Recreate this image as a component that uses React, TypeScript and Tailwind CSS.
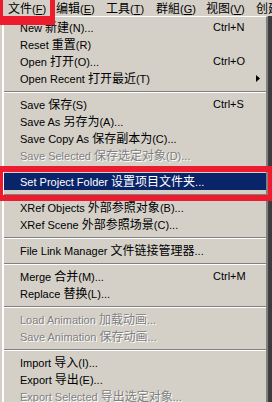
import React from 'react';

type Item =
    | { sep: true }
    | { sep?: false; label: string; shortcut?: string; sub?: boolean; disabled?: boolean; active?: boolean };

const items: Item[] = [
    { label: 'New 新建(N)...', shortcut: 'Ctrl+N' },
    { label: 'Reset 重置(R)' },
    { label: 'Open 打开(O)...', shortcut: 'Ctrl+O' },
    { label: 'Open Recent 打开最近(T)', sub: true },
    { sep: true },
    { label: 'Save 保存(S)', shortcut: 'Ctrl+S' },
    { label: 'Save As 另存为(A)...' },
    { label: 'Save Copy As 保存副本为(C)...' },
    { label: 'Save Selected 保存选定对象(D)...', disabled: true },
    { sep: true },
    { label: 'Set Project Folder 设置项目文件夹...', active: true },
    { sep: true },
    { label: 'XRef Objects 外部参照对象(B)...' },
    { label: 'XRef Scene 外部参照场景(C)...' },
    { sep: true },
    { label: 'File Link Manager 文件链接管理器...' },
    { sep: true },
    { label: 'Merge 合并(M)...', shortcut: 'Ctrl+M' },
    { label: 'Replace 替换(L)...' },
    { sep: true },
    { label: 'Load Animation 加载动画...', disabled: true },
    { label: 'Save Animation 保存动画...', disabled: true },
    { sep: true },
    { label: 'Import 导入(I)...' },
    { label: 'Export 导出(E)...' },
    { label: 'Export Selected 导出选定对象...', disabled: true },
];

const menus = [
    { name: '文件', key: 'F' },
    { name: '编辑', key: 'E' },
    { name: '工具', key: 'T' },
    { name: '群組', key: 'G' },
    { name: '视图', key: 'V' },
    { name: '创建', key: 'C' },
];

// split a label into latin / cjk runs so each gets its own size
const Text: React.FC<{ text: string }> = ({ text }) => (
    <>
        {text.split(/([\u4e00-\u9fff]+)/).map((part, i) =>
            /[\u4e00-\u9fff]/.test(part) ? (
                <span key={i} className="text-[12px] font-['Noto_Sans_CJK_SC',sans-serif]">
                    {part}
                </span>
            ) : (
                <span key={i}>{part}</span>
            )
        )}
    </>
);

export default function App() {
    return (
        <div className="relative w-[272px] h-[402px] overflow-hidden bg-[#d4d0c8] font-['Liberation_Sans','Noto_Sans_CJK_SC',sans-serif] text-[11px] text-black">
            {/* menu bar */}
            <div className="flex h-[16px] items-center">
                {menus.map((m, i) => (
                    <div
                        key={m.name}
                        className={`${i === 0 ? 'ml-[2px] w-[48px]' : 'w-[50px]'} shrink-0 whitespace-nowrap pl-[6px] leading-[16px]`}
                    >
                        <span className="text-[12px] font-['Noto_Sans_CJK_SC',sans-serif]">{m.name}</span>
                        {i < 5 && (
                            <span>
                                (<span className="underline">{m.key}</span>)
                            </span>
                        )}
                    </div>
                ))}
            </div>

            {/* dropdown */}
            <div className="flex">
                <div className="ml-[2px] w-[266px] shrink-0 border-l-2 border-r-2 border-t border-l-white border-r-[#808080] border-t-white pt-[2px]">
                    {items.map((it, i) =>
                        it.sep ? (
                            <div key={i} className="flex h-[9px] items-center">
                                <div className="h-[2px] w-full border-t border-b border-t-[#808080] border-b-white" />
                            </div>
                        ) : (
                            <div
                                key={i}
                                className={`flex h-[17px] items-center whitespace-nowrap pl-[16px] ${
                                    it.active ? 'bg-[#0a246a] text-white' : ''
                                } ${it.disabled ? 'text-[#808080] [text-shadow:1px_1px_0_#ffffff]' : ''}`}
                            >
                                <span className="w-[193px] shrink-0">
                                    <Text text={it.label} />
                                </span>
                                {it.shortcut && <span>{it.shortcut}</span>}
                                {it.sub && (
                                    <svg width="4" height="7" viewBox="0 0 4 7" className="ml-auto mr-[6px]">
                                        <path d="M0 0 L4 3.5 L0 7 Z" fill="#000" />
                                    </svg>
                                )}
                            </div>
                        )
                    )}
                </div>
                <div className="flex-1 border-l border-[#404040] bg-[#3c3c3c]" />
            </div>

            {/* red annotation boxes */}
            <div className="absolute left-0 top-[-6px] h-[31px] w-[55px] border-t-[6px] border-l-[3px] border-r-[5px] border-b-[9px] border-[#ec1c2e]" />
            <div className="absolute left-0 top-[166px] h-[35px] w-[276px] border-y-[6px] border-l-[3px] border-r-[8px] border-[#ec1c2e]" />
        </div>
    );
}
